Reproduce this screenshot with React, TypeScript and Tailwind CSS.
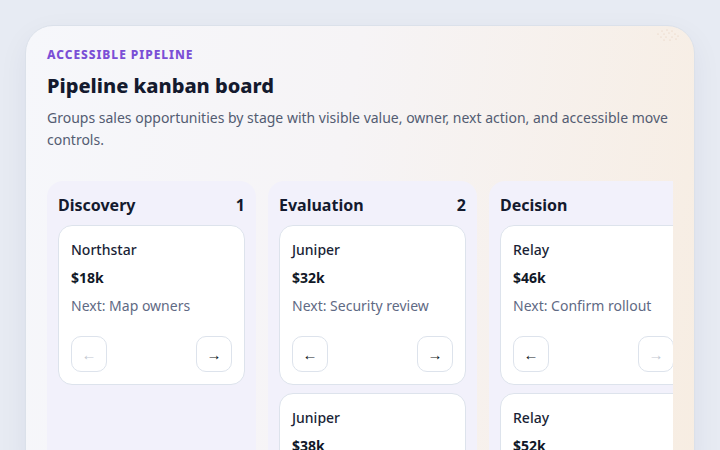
import React from "react";

type Deal = { name: string; value: string; next: string };
type Stage = { title: string; deals: Deal[] };

const stages: Stage[] = [
  { title: "Discovery", deals: [{ name: "Northstar", value: "$18k", next: "Map owners" }] },
  {
    title: "Evaluation",
    deals: [
      { name: "Juniper", value: "$32k", next: "Security review" },
      { name: "Juniper", value: "$38k", next: "Pricing call" },
    ],
  },
  {
    title: "Decision",
    deals: [
      { name: "Relay", value: "$46k", next: "Confirm rollout" },
      { name: "Relay", value: "$52k", next: "Legal sign-off" },
    ],
  },
];

function MoveButton({ dir, disabled }: { dir: "left" | "right"; disabled: boolean }) {
  return (
    <button
      disabled={disabled}
      aria-label={dir === "left" ? "Move to previous stage" : "Move to next stage"}
      className={
        "flex h-9 w-9 items-center justify-center rounded-[10px] border border-[#dde3ec] bg-white text-[15px] leading-none " +
        (disabled ? "text-[#c3c9d2]" : "text-[#111827]")
      }
    >
      {dir === "left" ? "←" : "→"}
    </button>
  );
}

function DealCard({ deal, first, last }: { deal: Deal; first: boolean; last: boolean }) {
  return (
    <div className="flex flex-col rounded-[14px] border border-[#dde3ec] bg-white px-3 pb-3 pt-[13px]">
      <div className="text-[14px] font-medium leading-[22px] text-[#1a1f36]">{deal.name}</div>
      <div className="mt-[6px] text-[14px] font-bold leading-[22px] text-[#111827]">{deal.value}</div>
      <div className="mt-[6px] text-[14px] leading-[22px] text-[#5f6a84]">Next: {deal.next}</div>
      <div className="mt-[19px] flex items-center justify-between">
        <MoveButton dir="left" disabled={first} />
        <MoveButton dir="right" disabled={last} />
      </div>
    </div>
  );
}

export default function App() {
  return (
    <div
      className="h-[450px] w-full overflow-hidden bg-[#e7ebf3] px-[25px] pt-[25px]"
      style={{ fontFamily: '"Noto Sans", "Open Sans", sans-serif' }}
    >
      <div className="relative h-[460px] overflow-hidden rounded-[28px] border border-[#dbe1ea] bg-[linear-gradient(100deg,#f6f7fb_0%,#f6f4f6_45%,#f7ede2_100%)] px-[21px] pt-[21px] shadow-[0_10px_30px_rgba(30,40,80,0.06)]">
        {/* faint dotted texture in the top-right corner */}
        <svg className="absolute right-[12px] top-[2px]" width="30" height="18" viewBox="0 0 30 18" aria-hidden="true">
          {[
            [10, 3], [15, 2], [20, 3], [6, 6], [12, 6], [17, 5], [23, 6], [9, 9], [14, 9], [20, 9], [26, 8], [12, 12], [18, 12], [24, 11],
          ].map(([x, y], i) => (
            <circle key={i} cx={x} cy={y} r="0.6" fill="#e4c9b6" />
          ))}
        </svg>
        <div className="text-[12px] font-extrabold uppercase leading-[16px] tracking-[0.08em] text-[#7b4fd6]">
          Accessible pipeline
        </div>
        <h1 className="mt-[8px] text-[20px] font-extrabold leading-[30px] text-[#141a2e]">Pipeline kanban board</h1>
        <p className="mt-[6px] text-[14px] leading-[22px] text-[#535c72]">
          Groups sales opportunities by stage with visible value, owner, next action, and accessible move controls.
        </p>
        <div className="mt-[30px] flex gap-3 overflow-hidden">
          {stages.map((stage, si) => (
            <section key={stage.title} className="w-[209px] shrink-0 rounded-[16px] bg-[#f2f1fb] px-[11px] pt-[13px] pb-3">
              <div className="flex items-center justify-between">
                <h2 className="text-[16px] font-bold leading-[22px] text-[#141a2e]">{stage.title}</h2>
                <span className="text-[16px] font-bold leading-[22px] text-[#141a2e]">{stage.deals.length}</span>
              </div>
              <div className="mt-[9px] flex flex-col gap-2">
                {stage.deals.map((d, di) => (
                  <DealCard key={di} deal={d} first={si === 0} last={si === stages.length - 1} />
                ))}
              </div>
            </section>
          ))}
        </div>
      </div>
    </div>
  );
}
